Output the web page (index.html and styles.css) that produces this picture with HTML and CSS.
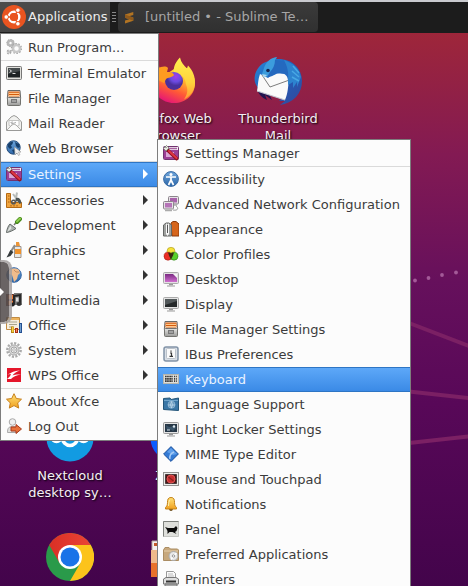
FILE: index.html
```html
<!DOCTYPE html>
<html lang="en">
<head>
<meta charset="utf-8">
<meta name="viewport" content="width=device-width, initial-scale=1">
<title>Xfce desktop</title>
<link rel="stylesheet" href="styles.css">
</head>
<body>
<svg class="defs" aria-hidden="true">
  <defs>
    <linearGradient id="purple" x1="0" y1="0" x2="0" y2="1"><stop offset="0" stop-color="#7b2a83"/><stop offset="1" stop-color="#cf6fce"/></linearGradient>
    <linearGradient id="steel" x1="0" y1="0" x2="0" y2="1"><stop offset="0" stop-color="#e4e4e2"/><stop offset="1" stop-color="#9a9a98"/></linearGradient>
    <linearGradient id="orange" x1="0" y1="0" x2="0" y2="1"><stop offset="0" stop-color="#ffc35c"/><stop offset="1" stop-color="#ef7d1a"/></linearGradient>
    <linearGradient id="gold" x1="0" y1="0" x2="0" y2="1"><stop offset="0" stop-color="#ffe27a"/><stop offset="1" stop-color="#f0a01e"/></linearGradient>
    <linearGradient id="blue" x1="0" y1="0" x2="0" y2="1"><stop offset="0" stop-color="#6fa6dc"/><stop offset="1" stop-color="#2c66a8"/></linearGradient>
  </defs>
  <symbol id="i-settings" viewBox="0 0 16 16">
    <rect x=".5" y="1.500" width="15" height="13" rx="1" fill="#f4eef4" stroke="#71336f"/>
    <path d="M1 5h14v9H1z" fill="#9c3f96"/><path d="M3 7h8v5H3z" fill="#d9a5d6"/>
    <path d="M6 3.500h8" stroke="#a7609f" stroke-width="1.500"/>
    <path d="M4.500 5 13.700 13.700" stroke="#8e1320" stroke-width="3.400" stroke-linecap="round"/>
    <path d="M6 6 13.500 13" stroke="#de3442" stroke-width="2" stroke-linecap="round"/>
    <path d="M.5 3.500 3.500.5 6 3 3 6z" fill="#e9e9e3" stroke="#87877f"/><path d="M2 1.500 3.500 3" stroke="#666"/>
  </symbol>
  <symbol id="i-files" viewBox="0 0 16 16">
    <path d="M2 .5h12l.7 8H1.300z" fill="#eceae6" stroke="#6a6a68"/>
    <path d="M2.500 1.500h11v5h-11z" fill="#d45a0c"/><path d="M3 3.300h10M3 5.500h10" stroke="#ffc98e" stroke-width="1.200"/>
    <rect x="1.500" y="7.500" width="13" height="8" rx="1" fill="url(#steel)" stroke="#73736f"/>
    <rect x="5.500" y="9.500" width="5" height="3" fill="#eee" stroke="#777"/><path d="M6 11h4" stroke="#555"/>
  </symbol>
</svg>

<header class="panel">
  <button class="apps" type="button">
    <svg class="ubuntu" viewBox="0 0 24 24" aria-hidden="true">
      <circle cx="12" cy="12" r="12" fill="#e95420"/>
      <circle cx="12" cy="12" r="5.300" fill="none" stroke="#fff" stroke-width="2.400"/>
      <g stroke="#e95420" stroke-width="1.400"><path d="M12 12H4M12 12l4-6.900M12 12l4 6.900"/></g>
      <circle cx="12" cy="12" r="4.100" fill="#e95420"/>
      <g fill="#fff" stroke="#e95420" stroke-width="1"><circle cx="4.200" cy="12" r="2.300"/><circle cx="15.900" cy="5.200" r="2.300"/><circle cx="15.900" cy="18.800" r="2.300"/></g>
    </svg>
    <span>Applications</span>
  </button>
  <span class="grip" aria-hidden="true"></span>
  <button class="task" type="button">
    <svg class="icon" viewBox="0 0 16 16" aria-hidden="true"><path d="M12.300 3 4 5.600v3.200l4.200 1.400L4 11.400v3l8.300-2.700V8.500L8 7.200l4.300-1.300z" fill="#b27423"/><path d="M4 5.600v3.200l8.300 2.900V8.500z" fill="#8f5a1c"/></svg>
    <span class="title">[untitled • - Sublime Te…</span>
  </button>
</header>

<main class="desktop">
  <svg class="wallpaper" viewBox="0 0 468 553" preserveAspectRatio="xMaxYMin slice" aria-hidden="true">
    <g fill="#a35a98"><circle cx="415" cy="247.500" r="1.900"/><circle cx="428.500" cy="245" r="1.900"/><circle cx="442" cy="242" r="1.900"/><circle cx="456" cy="239.500" r="1.900"/></g>
    <g stroke="#7b2064" stroke-width="4"><path d="M400 286.500 478 316.500"/><path d="M400 357.500 478 366"/><path d="M400 411 478 402.500"/></g>
  </svg>

  <a class="shortcut firefox" href="#">
    <svg viewBox="0 0 48 48" aria-hidden="true">
      <defs><linearGradient id="ff" x1=".8" y1="0" x2=".3" y2="1"><stop offset="0" stop-color="#fff44f"/><stop offset=".35" stop-color="#ffb52c"/><stop offset=".65" stop-color="#ff5a36"/><stop offset="1" stop-color="#e3107c"/></linearGradient>
      <linearGradient id="fy" x1="0" y1="0" x2="0" y2="1"><stop offset="0" stop-color="#fff14e"/><stop offset=".6" stop-color="#ffd23c"/><stop offset="1" stop-color="#ff9a34"/></linearGradient>
      <radialGradient id="fp" cx=".6" cy=".25"><stop offset="0" stop-color="#a43dea"/><stop offset=".6" stop-color="#6a4be0"/><stop offset="1" stop-color="#4b2f9b"/></radialGradient></defs>
      <path d="M24 12c6-1 12-2 14 0 4 4 7 8 7 14 0 12-9 20-21 20S3 37 3 26C3 18 6 13 9 9l1 5 4-3 0 4 4 1z" fill="url(#ff)"/>
      <path d="M30 .5c1 5 4 8 7 11l1-3c5 5 7 11 7 17 0 8-5 14-11 17 4-6 4-10 2-15-1-8-5-11-12-12-1-6 2-11 6-15z" fill="url(#fy)"/>
      <circle cx="24" cy="24" r="9" fill="url(#fp)"/>
      <path d="M7 12c5-3 9-3 11-1l-1 4c2 0 6 0 7 3-2 3-6 2-8 4l-2 4-8-4z" fill="#ff9b20"/>
    </svg>
    <span class="label">Firefox Web Browser</span>
  </a>
  <a class="shortcut thunderbird" href="#">
    <svg viewBox="0 0 48 48" aria-hidden="true">
      <defs><linearGradient id="tb" x1="0" y1="0" x2="1" y2="1"><stop offset="0" stop-color="#2a8ad8"/><stop offset=".45" stop-color="#1f62bd"/><stop offset="1" stop-color="#33479b"/></linearGradient></defs>
      <path d="M3 30c0 6 5 11 10 13l-2-5 7 5-4-8z" fill="#21134f"/>
      <path d="M17 3 23 0l-1 2c16-1 26 9 26 22 0 13-9 22-22 24l5-4-6 0 5-5C12 38-2 32 1 18 2 13 7 6 12 5z" fill="url(#tb)"/>
      <path d="M6 17 14 21 20 16l13 1 2 5c-1 8-1 14-4 21L3 34C4 28 4 22 6 17z" fill="#fafafa"/>
      <path d="M8 18 16 30 34 23.500" fill="none" stroke="#7d7d7d"/>
      <path d="M3 34 31 43" stroke="#c3c5d0" stroke-width="1.200"/>
      <path d="M21 3c-6 2-9 6-12 13l6 4c5-1 7-4 11-4 5 0 8 3 8 8l5-3c1-9-4-17-18-18z" fill="#2469bf"/>
      <path d="M30 3c9 3 15 8 17 17l-4 10 0-5-4 6 0-6-5 3 0-5c1-8-1-14-4-20z" fill="#2d83cf"/>
      <path d="m39 9 6 7M38 14l7 6M38 20l7 4" stroke="#48a8e4" stroke-width="1.500"/>
      <path d="M23 0c-7 1-11 5-13 11l-2 6 5 3 3-5c3-3 5-7 5-12z" fill="#3c9ddd"/>
      <circle cx="14" cy="13.500" r="1.800" fill="#172552"/><path d="m8 17 5 1-3 3z" fill="#a9d7ef"/>
    </svg>
    <span class="label">Thunderbird Mail</span>
  </a>
  <a class="shortcut nextcloud" href="#">
    <svg viewBox="0 0 48 48" aria-hidden="true"><circle cx="24" cy="24" r="23.500" fill="#129be2"/><g fill="none" stroke="#fff" stroke-width="3.500"><circle cx="24" cy="24" r="7.500"/><circle cx="10.500" cy="23" r="4.500"/><circle cx="37.500" cy="23" r="4.500"/></g></svg>
    <span class="label">Nextcloud desktop sy…</span>
  </a>
  <a class="shortcut zoom" href="#">
    <svg viewBox="0 0 48 48" aria-hidden="true"><circle cx="24" cy="24" r="23.500" fill="#0b5cff"/><rect x="10" y="16" width="19" height="16" rx="4" fill="#fff"/><path d="m31 22 7-5v14l-7-5z" fill="#fff"/></svg>
    <span class="label">Zoom</span>
  </a>
  <a class="shortcut chrome" href="#" aria-label="Chrome">
    <svg viewBox="0 0 48 48" aria-hidden="true">
      <defs><linearGradient id="cr"><stop offset="0" stop-color="#d93025"/><stop offset="1" stop-color="#ea4335"/></linearGradient></defs>
      <circle cx="24" cy="24" r="24" fill="#2a9a4a"/>
      <path d="M24 12h20.800A24 24 0 0 1 24 48L34.400 30z" fill="#fcc31b"/>
      <path d="M3.200 12A24 24 0 0 1 44.800 12H24L13.600 30z" fill="url(#cr)"/>
      <circle cx="24" cy="24" r="12" fill="#fff"/><circle cx="24" cy="24" r="9.500" fill="#1a73e8"/>
    </svg>
  </a>
  <a class="shortcut cleaner" href="#" aria-label="Cleaner">
    <svg viewBox="0 0 48 48" aria-hidden="true"><path d="M2 8h44v12H2z" fill="#f5f2ef" stroke="#b8a9a0"/><path d="M4 10h4v3H4z" fill="#c35a2b"/><path d="M1 18h46v26H1z" fill="url(#orange)"/><path d="M1 17h8v13H1z" fill="#efb98b"/><path d="M1 30h46v14H1z" fill="#e8712c"/></svg>
  </a>
</main>

<nav class="menu main-menu" aria-label="Applications">
  <ul>
    <li><button type="button"><svg class="icon" viewBox="0 0 16 16"><g fill="none" stroke="#a9a9a9"><circle cx="4.500" cy="4" r="2.500" stroke-width="2.600" stroke="#b9b9b9"/><circle cx="10.500" cy="9.500" r="3.500" stroke-width="2.500" stroke="#c9c9c9"/><circle cx="10.500" cy="9.500" r="5" stroke-width="1.200" stroke-dasharray="1.600 1.500"/><circle cx="4.500" cy="4" r="3.700" stroke-dasharray="1.400 1.400"/><circle cx="3" cy="13" r="1.500" stroke-width="2" stroke-dasharray="1.500 .8"/></g></svg><span>Run Program...</span></button></li>
    <li class="ruled"><button type="button"><svg class="icon" viewBox="0 0 16 16"><rect x=".5" y="1.500" width="15" height="13" rx="1" fill="#e0e0dc" stroke="#777"/><rect x="2" y="3" width="12" height="9.500" fill="#1e2224"/><path d="M2 3h12v3L2 9z" fill="#454a4c"/><path d="m3.500 4.500 2 1.500-2 1.500M6.500 8.500h3" fill="none" stroke="#ddd"/></svg><span>Terminal Emulator</span></button></li>
    <li><button type="button"><svg class="icon"><use href="#i-files"/></svg><span>File Manager</span></button></li>
    <li><button type="button"><svg class="icon" viewBox="0 0 16 16"><path d="M.5 7 5 2 8 .5 11 2l4.500 5v8.500H.5z" fill="#f1f1ef" stroke="#9a9a98"/><path d="M3 5.500h10v5l-5 2-5-2z" fill="#fff" stroke="#c4c4c2"/><path d="M4.500 7.500 7 7M5 9l5-1.500" stroke="#aaa"/><path d="m1 15 5-5 2-1 2 1 5 5" fill="#fbfbfa" stroke="#aeaeac"/></svg><span>Mail Reader</span></button></li>
    <li><button type="button"><svg class="icon" viewBox="0 0 16 16"><circle cx="7.500" cy="7.500" r="6.700" fill="url(#blue)" stroke="#244a79"/><path d="M2 4.500C4 2 6 1.500 7 2l-.5 2L5 5.500l1 2-2 1.500-2-2zM9 2l4 2 1 3-2 1-2-2zM6 10l3-1 1 2-2 3z" fill="#173f6b"/><path d="m8.500 7 .5 8 2-2 1.500 2.500 1.500-1-1.500-2.200 2.500-.3z" fill="#eee" stroke="#999" stroke-width=".6"/></svg><span>Web Browser</span></button></li>
    <li class="ruled"><button type="button" class="active" aria-haspopup="true"><svg class="icon"><use href="#i-settings"/></svg><span>Settings</span></button></li>
    <li class="ruled"><button type="button" aria-haspopup="true"><svg class="icon" viewBox="0 0 16 16"><path d="M.5 1.500h4v9h11v5H.5z" fill="#f1a53f" stroke="#b56a14"/><path d="M2 4h1.500M2 7h1.500M2 10h1.500M5 13v1.500M8 13v1.500M11 13v1.500" stroke="#a65e12"/><path d="m7 2 6 8M11 .5 9.500 9" stroke="#b7bbb9" stroke-width="2"/><circle cx="7.500" cy="10" r="1.800" fill="none" stroke="#555" stroke-width="1.500"/><path d="M10 6c3-1 5 1 5.500 5l-2 1-2-3-2 1z" fill="#4c5455"/></svg><span>Accessories</span></button></li>
    <li><button type="button" aria-haspopup="true"><svg class="icon" viewBox="0 0 16 16"><path d="m8 8 3-3.500" stroke="#777" stroke-width="1.500"/><path d="m11 5 3-3" stroke="#458918" stroke-width="4" stroke-linecap="round"/><path d="m11 4.500 3-3" stroke="#8fce51" stroke-width="2" stroke-linecap="round"/><path d="m4 7 6 4.500c-3 2-6 3.500-9.500 4C1 12 2 9 4 7z" fill="#aab0ad" stroke="#666c69"/><path d="m4.500 8.500 1 3-4.500 3.500z" fill="#e1e4e2"/></svg><span>Development</span></button></li>
    <li><button type="button" aria-haspopup="true"><svg class="icon" viewBox="0 0 16 16"><path d="m10 0 3 0 1 4h-4z" fill="#eb9639"/><path d="M8.500 4.500h6.500v11H8.500z" fill="#e6e6e3" stroke="#9c938c"/><path d="M9 7h6v5H9z" fill="#f0922b"/><path d="m9 3-5 8" stroke="#8d8d8a" stroke-width="2"/><path d="m4.500 8 3 2-3 4-4 1.500z" fill="#33393b"/></svg><span>Graphics</span></button></li>
    <li><button type="button" aria-haspopup="true"><svg class="icon" viewBox="0 0 16 16"><circle cx="8" cy="8" r="7.300" fill="url(#blue)" stroke="#3465a4"/><path d="M3 3c3-2 8-2 10 0l1 3-2 2-1 4-3 3-1-4-1-3-3-1z" fill="#efbc8c"/><path d="m8 3 2 2 3 0" fill="none" stroke="#c88d5e"/></svg><span>Internet</span></button></li>
    <li><button type="button" aria-haspopup="true"><svg class="icon" viewBox="0 0 16 16"><path d="M0 2h8v12H0z" fill="#6b3b31"/><path d="M2 3h5v4H2zM2 9h5v4H2z" fill="#ef7c35"/><path d="M8 1h8v12H8z" fill="#777"/><path d="M8 12V4l6-1v8" fill="none" stroke="#222" stroke-width="1.800"/><ellipse cx="6.500" cy="12.500" rx="2.300" ry="2" fill="#222"/><ellipse cx="13" cy="12" rx="2.300" ry="2" fill="#333"/><path d="M10 5.500h2.500v4H10z" fill="#ddd"/></svg><span>Multimedia</span></button></li>
    <li><button type="button" aria-haspopup="true"><svg class="icon" viewBox="0 0 16 16"><path d="M.5.500h13v12H.5z" fill="#f7efdf" stroke="#c18b42"/><path d="M1 1h12v2H1z" fill="#edb35c"/><path d="M3 5h8M3 7.500h8M3 10h4" stroke="#aaa58f"/><path d="M5 9.500h3V16H5z" fill="#b88515"/><path d="M6 10h1.500v5H6z" fill="#f7d344"/><path d="M9 11h3v5H9z" fill="#a72d14"/><path d="M10 12h1v3h-1z" fill="#f38a56"/><path d="M13 6h3v10h-3z" fill="#234f91"/><path d="M14 7h1v8h-1z" fill="#729fcf"/></svg><span>Office</span></button></li>
    <li><button type="button" aria-haspopup="true"><svg class="icon" viewBox="0 0 16 16"><circle cx="8" cy="8" r="6.700" fill="none" stroke="#aaa" stroke-width="2.400" stroke-dasharray="2.100 1.400"/><circle cx="8" cy="8" r="5" fill="#ddd" stroke="#aaa"/><circle cx="8" cy="8" r="3" fill="#eee" stroke="#a5a5a5"/><circle cx="8" cy="8" r="1.300" fill="#fff" stroke="#b5b5b5"/></svg><span>System</span></button></li>
    <li><button type="button" aria-haspopup="true"><svg class="icon" viewBox="0 0 16 16"><path d="M1 1h14v14H1z" fill="#e5162b"/><path d="M1 7.500C4 7 6 4 14 3.500 10 5 8 6 6.500 8.500 9 7.500 11 7.300 15 7.500 10 8 7 10 5 12H1c1-1 3-2 4-5z" fill="#fff"/><path d="M1 9.500 4 8" stroke="#e5162b"/></svg><span>WPS Office</span></button></li>
    <li class="ruled"><button type="button"><svg class="icon" viewBox="0 0 16 16"><path d="m8 .7 2.300 4.800 5.200.7-3.800 3.700 1 5.200L8 12.600l-4.700 2.500 1-5.200L.5 6.200l5.200-.7z" fill="url(#gold)" stroke="#c77f1b" stroke-linejoin="round"/></svg><span>About Xfce</span></button></li>
    <li><button type="button"><svg class="icon" viewBox="0 0 16 16"><circle cx="6.500" cy="4" r="3.300" fill="#eee" stroke="#aaa"/><path d="M1.500 14.500c0-4 1-6 5-6s5 2 5 6z" fill="#e1e1df" stroke="#aaa"/><path d="M5 9h5V6.500l5.500 4.500-5.500 4.500V13H5z" fill="#e8713a" stroke="#a8391a"/></svg><span>Log Out</span></button></li>
  </ul>
</nav>

<nav class="menu sub-menu" aria-label="Settings">
  <ul>
    <li><button type="button"><svg class="icon"><use href="#i-settings"/></svg><span>Settings Manager</span></button></li>
    <li class="ruled"><button type="button"><svg class="icon" viewBox="0 0 16 16"><circle cx="8" cy="8" r="7.400" fill="url(#blue)" stroke="#3a6ca5"/><circle cx="8" cy="3.500" r="1.500" fill="#fff"/><path d="M3 6h10M8 6v4M8 9l-2.500 5M8 9l2.500 5" stroke="#fff" stroke-width="1.700"/></svg><span>Accessibility</span></button></li>
    <li><button type="button"><svg class="icon" viewBox="0 0 16 16"><rect x="5.500" y=".5" width="10" height="7.500" rx="1" fill="#e6e2e6" stroke="#8c858c"/><path d="M7 2h7v4.500H7z" fill="#a862aa"/><path d="M8 9h6" stroke="#aaa" stroke-width="1.500"/><rect x=".5" y="5.500" width="10" height="7.500" rx="1" fill="#e6e2e6" stroke="#8c858c"/><path d="M2 7h7v4.500H2z" fill="#b674b8"/><path d="M2 14.500h7" stroke="#aaa" stroke-width="1.500"/><path d="M10 14c5 1 6-2 3-4" fill="none" stroke="#999"/></svg><span>Advanced Network Configuration</span></button></li>
    <li><button type="button"><svg class="icon" viewBox="0 0 16 16"><path d="M8 2 10 .5h3L16 3v12H9z" fill="#d6651c" stroke="#8c3b0c"/><path d="M.5 15V4L3 2h3l2.500 2v11z" fill="#9fa19f" stroke="#656765"/><path d="m3 2 1.500 2L6 2v11l-1.500 2L3 13z" fill="#f8f8f8"/><path d="M4.500 4v8" stroke="#555"/></svg><span>Appearance</span></button></li>
    <li><button type="button"><svg class="icon" viewBox="0 0 16 16"><circle cx="8" cy="5.300" r="4" fill="#f6e33a" stroke="#a9951c" stroke-width=".6"/><circle cx="5" cy="10.200" r="4" fill="#ec2e24" stroke="#a01e18" stroke-width=".6"/><circle cx="11" cy="10.200" r="4" fill="#58cf2b" stroke="#2b7a16" stroke-width=".6"/><path d="M5 6.500q3 0 3 1 0-1 3-1l-1 3-2 4-2-4z" fill="#3a2a10"/></svg><span>Color Profiles</span></button></li>
    <li><button type="button"><svg class="icon" viewBox="0 0 16 16"><rect x=".5" y="1.500" width="15" height="11" rx="1" fill="#e4e0e4" stroke="#aaa"/><path d="M2 3h12v8H2z" fill="url(#purple)"/><path d="M10 3h4v4z" fill="#f4f4f4"/><path d="M6 13h4v1.500H6z" fill="#999"/><path d="M4 15h8" stroke="#bbb" stroke-width="1.500"/></svg><span>Desktop</span></button></li>
    <li><button type="button"><svg class="icon" viewBox="0 0 16 16"><rect x=".5" y="1.500" width="15" height="11" rx="1" fill="#e4e4e4" stroke="#aaa"/><path d="M2 3h12v8H2z" fill="#25292a"/><path d="M2 3h12v2L2 9z" fill="#52585a"/><path d="M6 13h4v1.500H6z" fill="#999"/><path d="M4 15h8" stroke="#bbb" stroke-width="1.500"/></svg><span>Display</span></button></li>
    <li><button type="button"><svg class="icon"><use href="#i-files"/></svg><span>File Manager Settings</span></button></li>
    <li><button type="button"><svg class="icon" viewBox="0 0 16 16"><rect x="1" y="1" width="14" height="14" rx="2" fill="#d9dfe6" stroke="#8193a7" stroke-width="1.500"/><rect x="3.500" y="2.500" width="9" height="10" rx="1" fill="#fafafa" stroke="#bbc2ca"/><path d="M7 7h1.500v3M6.500 10.300h3.500M8 4.500v1.200" fill="none" stroke="#333" stroke-width="1.200"/></svg><span>IBus Preferences</span></button></li>
    <li><button type="button" class="active"><svg class="icon" viewBox="0 0 16 16"><rect x=".5" y="3.500" width="15" height="9" fill="#deded9" stroke="#b5b5ae"/><g stroke="#393939" stroke-width="1.700"><path d="M2 5.500h8M2 7.800h8M2 10.200h8" stroke-dasharray="1.300 .3"/><path d="M11 5.500h3M11 7.800h3M11 10.200h3" stroke-dasharray="1 .8"/></g></svg><span>Keyboard</span></button></li>
    <li><button type="button"><svg class="icon" viewBox="0 0 16 16"><path d="M.5 2.500 7 2l1 1.500L15.500 2v12.500l-15-1z" fill="#3a77a6" stroke="#235579"/><path d="M1 4.500h14" stroke="#70a5cb"/><circle cx="8.500" cy="8.700" r="3.500" fill="#6699bf" stroke="#86b0cf"/><path d="M5 9h7M8.500 5.500q-2 3 0 6.500M8.500 5.500q2 3 0 6.500" fill="none" stroke="#c2dbec" stroke-width=".8"/></svg><span>Language Support</span></button></li>
    <li><button type="button"><svg class="icon" viewBox="0 0 16 16"><rect x=".5" y="1.500" width="15" height="11" rx="1" fill="#e4e4e4" stroke="#999"/><path d="M2 3h12v8H2z" fill="#263746"/><path d="M3 4q4 4 8 0l2 3-3 3q-3-3-6 0z" fill="#3c566b"/><circle cx="11" cy="5.500" r="1.200" fill="#dce8ef"/><path d="M4 9h3" stroke="#d4dee5"/><path d="M6 13h4v1.500H6z" fill="#999"/><path d="M4 15h8" stroke="#bbb" stroke-width="1.500"/></svg><span>Light Locker Settings</span></button></li>
    <li><button type="button"><svg class="icon" viewBox="0 0 16 16"><path d="M8 .6 15.400 8 8 15.400.6 8z" fill="#347bd5" stroke="#1b519c" stroke-linejoin="round"/><path d="M8 2 14 8l-4 1-6-3z" fill="#5f9fea"/><path d="M7 13q-1-5 4-7" fill="none" stroke="#a4caf5" stroke-width="1.500"/></svg><span>MIME Type Editor</span></button></li>
    <li><button type="button"><svg class="icon" viewBox="0 0 16 16"><rect x=".5" y="1.500" width="15" height="13" fill="#ededeb" stroke="#929290"/><path d="M2.500 3.500h11v9h-11z" fill="#4d1616" stroke="#493d3d"/><circle cx="8" cy="8" r="4" fill="#c93030" stroke="#de5555"/><path d="m5.500 6 5 4" stroke="#872020" stroke-width="1.300"/></svg><span>Mouse and Touchpad</span></button></li>
    <li><button type="button"><svg class="icon" viewBox="0 0 16 16"><circle cx="8" cy="13.300" r="1.800" fill="#6b4b17"/><path d="M8 1.500c-3 0-3.500 2-3.500 5s-1 4-2 5v1.500h11v-1.500c-1-1-2-2-2-5s-.5-5-3.500-5z" fill="url(#gold)" stroke="#c48219"/><path d="M6.500 4q-1 2-1 6" stroke="#fff2ad" fill="none"/></svg><span>Notifications</span></button></li>
    <li><button type="button"><svg class="icon" viewBox="0 0 16 16"><path d="M.5.500h15v15H.5z" fill="#dedfdb" stroke="#c4c6c2"/><path d="M.5 15.500V.5h15" fill="none" stroke="#7d807c"/><path d="m2 6 3 1 6 0 2-2 1.500 2-1 3-1.500 1 1.500 2-2-1-2-1-3 0-2 2 0-3-1-2z" fill="#090909"/></svg><span>Panel</span></button></li>
    <li><button type="button"><svg class="icon" viewBox="0 0 16 16"><path d="M.5 4 2 1.500h4L7.500 3h7l1 1v10.500H.5z" fill="#c7a87d" stroke="#ab8d63"/><path d="M1 5h14" stroke="#e5cfac"/><circle cx="10.500" cy="10" r="4.500" fill="#e9e9e9" stroke="#a8a8a8"/><path d="m10.500 10 3-3M10.500 10l-2.500 3.500" stroke="#fff" stroke-width="1.500"/><circle cx="10.500" cy="10" r="1.200" fill="#fff" stroke="#999"/></svg><span>Preferred Applications</span></button></li>
    <li><button type="button"><svg class="icon" viewBox="0 0 16 16"><path d="M3.500 7V.5h7l2 2V7" fill="#fafafa" stroke="#999"/><path d="M5 3h5M5 5h6" stroke="#bbb"/><path d="M.5 13V8L3 6.500h10L15.500 8v5z" fill="#ddd" stroke="#777"/><path d="M3 9.500h10v2H3z" fill="#333"/><path d="M2 13h12v2.500H2z" fill="#aaa" stroke="#777"/></svg><span>Printers</span></button></li>
  </ul>
</nav>

<button class="drawer" type="button" aria-label="Open side bar"></button>
</body>
</html>
```
FILE: styles.css
```css
* {
  box-sizing: border-box;
}

html,
body {
  height: 100%;
}

body {
  margin: 0;
  position: relative;
  display: flex;
  flex-direction: column;
  overflow: hidden;
  font-family: "DejaVu Sans", sans-serif;
  font-size: 13px;
  line-height: 17px;
  color: #3b3b3b;
  background: #45044c;
}

button {
  font: inherit;
  color: inherit;
  border: 0;
  margin: 0;
  padding: 0;
  background: none;
  text-align: left;
}

.defs {
  position: absolute;
  width: 0;
  height: 0;
}

.icon {
  flex: none;
  width: 16px;
  height: 16px;
}

/* Top panel */
.panel {
  flex: none;
  display: flex;
  align-items: stretch;
  height: 33px;
  padding-bottom: 1px;
  border-top: 2px solid #c9cacf;
  background: #1c1c1c;
}

.apps {
  display: flex;
  align-items: center;
  gap: 2px;
  width: 110px;
  padding: 0 0 1px 2px;
  color: #ececec;
  white-space: nowrap;
  background: linear-gradient(#4b4b4b, #444);
}

.ubuntu {
  flex: none;
  width: 24px;
  height: 24px;
}

.grip {
  align-self: center;
  width: 4px;
  height: 10px;
  margin: 0 2px;
  background: repeating-linear-gradient(#888 0 1px, transparent 1px 3px);
}

.task {
  display: flex;
  align-items: center;
  gap: 8px;
  width: 200px;
  padding: 0 8px 1px 3px;
  border-radius: 4px;
  color: #a6a6a6;
  background: linear-gradient(#3b3b3b, #303030);
}

.title {
  overflow: hidden;
  white-space: nowrap;
}

/* Desktop */
.desktop {
  flex: 1;
  position: relative;
  display: grid;
  grid-template-columns: repeat(auto-fill, 104px);
  grid-template-rows: repeat(5, 119px);
  padding: 24px 0 0 18px;
  overflow: hidden;
  background: linear-gradient(#9e263a 0%, #831a53 22%, #66105c 45%, #580858 67%, #43044b 100%);
}

.wallpaper {
  position: absolute;
  inset: 0;
  width: 100%;
  height: 100%;
}

.shortcut {
  position: relative;
  display: flex;
  flex-direction: column;
  align-items: center;
  gap: 5px;
  color: #f4eef4;
  text-align: center;
  text-decoration: none;
  text-shadow: 1px 1px 2px #000;
}

.shortcut svg {
  width: 48px;
  height: 48px;
}

.label {
  width: 92px;
}

.firefox { grid-area: 1 / 2; }
.thunderbird { grid-area: 1 / 3; }
.nextcloud { grid-area: 4 / 1; }
.zoom { grid-area: 4 / 2; }
.chrome { grid-area: 5 / 1; }
.cleaner { grid-area: 5 / 2; }

/* Menus */
.menu {
  position: absolute;
  padding: 1px 0;
  border: 1px solid #7d7d7d;
  background: #fcfcfc;
}

.menu ul {
  margin: 0;
  padding: 0;
  list-style: none;
}

.main-menu {
  top: 33px;
  left: 0;
  width: 159px;
}

.sub-menu {
  top: 139px;
  left: 157px;
  width: 254px;
}

.ruled {
  border-top: 1px solid #dadada;
}

.menu button {
  display: flex;
  align-items: center;
  gap: 6px;
  width: 100%;
  height: 25px;
  padding: 0 10px 1px 5px;
  border: solid transparent;
  border-width: 1px 0;
  white-space: nowrap;
}

.menu button[aria-haspopup]::after {
  content: "";
  margin-left: auto;
  border: solid transparent;
  border-width: 5px 0 5px 5px;
  border-left-color: #333;
}

.menu .active {
  color: #eaf3ff;
  border-color: #2e75c4;
  background: linear-gradient(#5da8f8, #3b8ae6);
}

.menu .active[aria-haspopup]::after {
  border-left-color: #fff;
}

/* Pull-out handle over the left edge */
.drawer {
  position: absolute;
  top: 260px;
  left: 0;
  display: flex;
  align-items: center;
  width: 12px;
  height: 64px;
  border: solid rgba(165, 160, 160, 0.85);
  border-width: 2px 3px 2px 0;
  border-radius: 0 8px 8px 0;
  background: rgba(85, 78, 78, 0.88);
  background-clip: padding-box;
}

.drawer::after {
  content: "";
  border: solid transparent;
  border-width: 4px 0 4px 4px;
  border-left-color: #fff;
}
```
